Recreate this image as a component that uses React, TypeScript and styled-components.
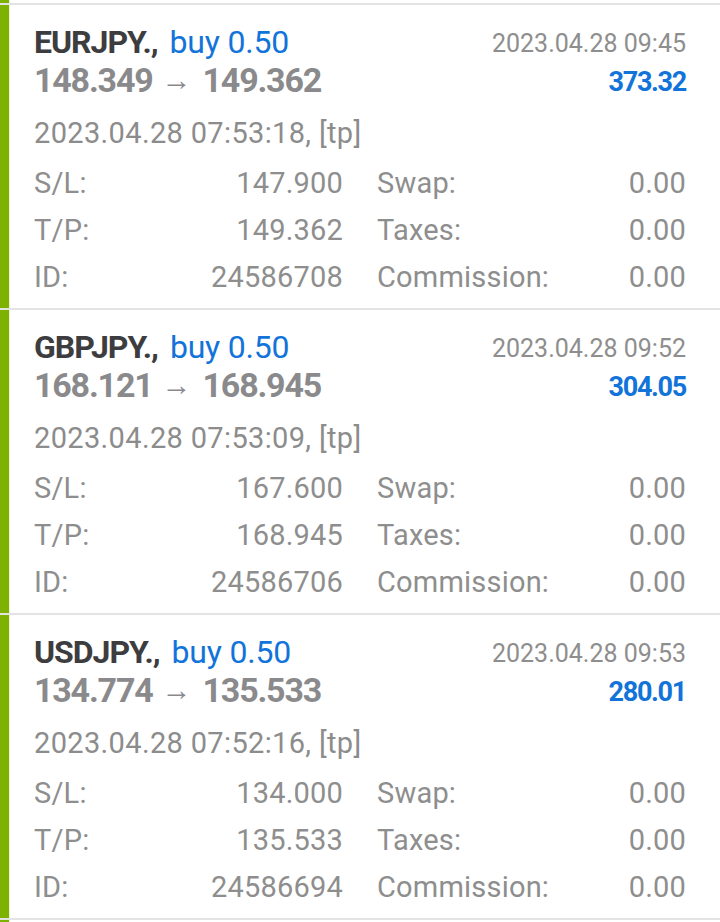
import styled, { createGlobalStyle } from "styled-components"

interface IDeal {
  symbol: string
  side: string
  openPrice: string
  closePrice: string
  closeTime: string
  profit: string
  openTime: string
  sl: string
  tp: string
  id: string
}

const deals: IDeal[] = [
  {
    symbol: "EURJPY.,",
    side: "buy 0.50",
    openPrice: "148.349",
    closePrice: "149.362",
    closeTime: "2023.04.28 09:45",
    profit: "373.32",
    openTime: "2023.04.28 07:53:18, [tp]",
    sl: "147.900",
    tp: "149.362",
    id: "24586708",
  },
  {
    symbol: "GBPJPY.,",
    side: "buy 0.50",
    openPrice: "168.121",
    closePrice: "168.945",
    closeTime: "2023.04.28 09:52",
    profit: "304.05",
    openTime: "2023.04.28 07:53:09, [tp]",
    sl: "167.600",
    tp: "168.945",
    id: "24586706",
  },
  {
    symbol: "USDJPY.,",
    side: "buy 0.50",
    openPrice: "134.774",
    closePrice: "135.533",
    closeTime: "2023.04.28 09:53",
    profit: "280.01",
    openTime: "2023.04.28 07:52:16, [tp]",
    sl: "134.000",
    tp: "135.533",
    id: "24586694",
  },
]

const GlobalStyle = createGlobalStyle`
  html, body {
    margin: 0;
    padding: 0;
    background: #ffffff;
    height: 922px;
    overflow: hidden;
  }
  body {
    font-family: Roboto, "Liberation Sans", sans-serif;
  }
`

const List = styled.div`
  width: 720px;
  display: flex;
  flex-direction: column;
`

const Card = styled.div`
  display: flex;
  border-bottom: 2px solid #e3e3e3;
`

const Bar = styled.div`
  width: 9px;
  flex-shrink: 0;
  background: #7db300;
  border-right: 1px solid #eaf3d6;
`

const Peek = styled.div<{ $h: number }>`
  height: ${(p) => p.$h}px;
`

const Body = styled.div`
  flex: 1;
  padding: 18px 34px 7px 24px;
  color: #8c8c8c;
`

const Header = styled.div`
  display: flex;
  justify-content: space-between;
`

const TitleCol = styled.div`
  display: flex;
  flex-direction: column;
`

const Title = styled.div`
  font-size: 32px;
  line-height: 38px;
  white-space: nowrap;
`

const Symbol = styled.span`
  font-weight: 700;
  color: #3d3d3f;
  letter-spacing: -1px;
`

const Side = styled.span`
  color: #1273d9;
  margin-left: 12px;
  letter-spacing: -0.2px;
`

const Prices = styled.div`
  font-size: 34px;
  line-height: 38px;
  font-weight: 700;
  letter-spacing: -1.2px;
  color: #8a8a8c;
  white-space: nowrap;
`

const Arrow = styled.span`
  font-weight: 400;
  font-size: 30px;
  letter-spacing: 0;
  margin: 0 11px 0 9px;
  position: relative;
  top: -2px;
`

const SideCol = styled.div`
  display: flex;
  flex-direction: column;
  align-items: flex-end;
  padding-top: 2px;
`

const CloseTime = styled.div`
  font-size: 25px;
  line-height: 38px;
  color: #8e8e8e;
`

const Profit = styled.div`
  font-size: 27px;
  line-height: 38px;
  font-weight: 700;
  letter-spacing: -1.3px;
  color: #1273d9;
`

const OpenTime = styled.div`
  font-size: 29px;
  letter-spacing: 0.35px;
  line-height: 44px;
  margin-top: 10px;
`

const Details = styled.div`
  display: grid;
  grid-template-columns: 1fr 1fr;
  column-gap: 34px;
  margin-top: 5px;
`

const Field = styled.div`
  display: flex;
  justify-content: space-between;
  font-size: 29px;
  letter-spacing: 0.2px;
  line-height: 47px;
  color: #8e8e8e;
`

const DealCard = ({ deal }: { deal: IDeal }) => {
  const rows: [string, string][] = [
    ["S/L:", deal.sl],
    ["Swap:", "0.00"],
    ["T/P:", deal.tp],
    ["Taxes:", "0.00"],
    ["ID:", deal.id],
    ["Commission:", "0.00"],
  ]
  return (
    <Card>
      <Bar />
      <Body>
        <Header>
          <TitleCol>
            <Title>
              <Symbol>{deal.symbol}</Symbol>
              <Side>{deal.side}</Side>
            </Title>
            <Prices>
              {deal.openPrice}
              <Arrow>→</Arrow>
              {deal.closePrice}
            </Prices>
          </TitleCol>
          <SideCol>
            <CloseTime>{deal.closeTime}</CloseTime>
            <Profit>{deal.profit}</Profit>
          </SideCol>
        </Header>
        <OpenTime>{deal.openTime}</OpenTime>
        <Details>
          {rows.map(([label, value]) => (
            <Field key={label}>
              <span>{label}</span>
              <span>{value}</span>
            </Field>
          ))}
        </Details>
      </Body>
    </Card>
  )
}

const App = () => {
  return (
    <>
      <GlobalStyle />
      <List>
        <Card>
          <Bar />
          <Peek $h={3} />
        </Card>
        {deals.map((d) => (
          <DealCard key={d.id} deal={d} />
        ))}
        <Card>
          <Bar />
          <Peek $h={40} />
        </Card>
      </List>
    </>
  )
}

export default App
